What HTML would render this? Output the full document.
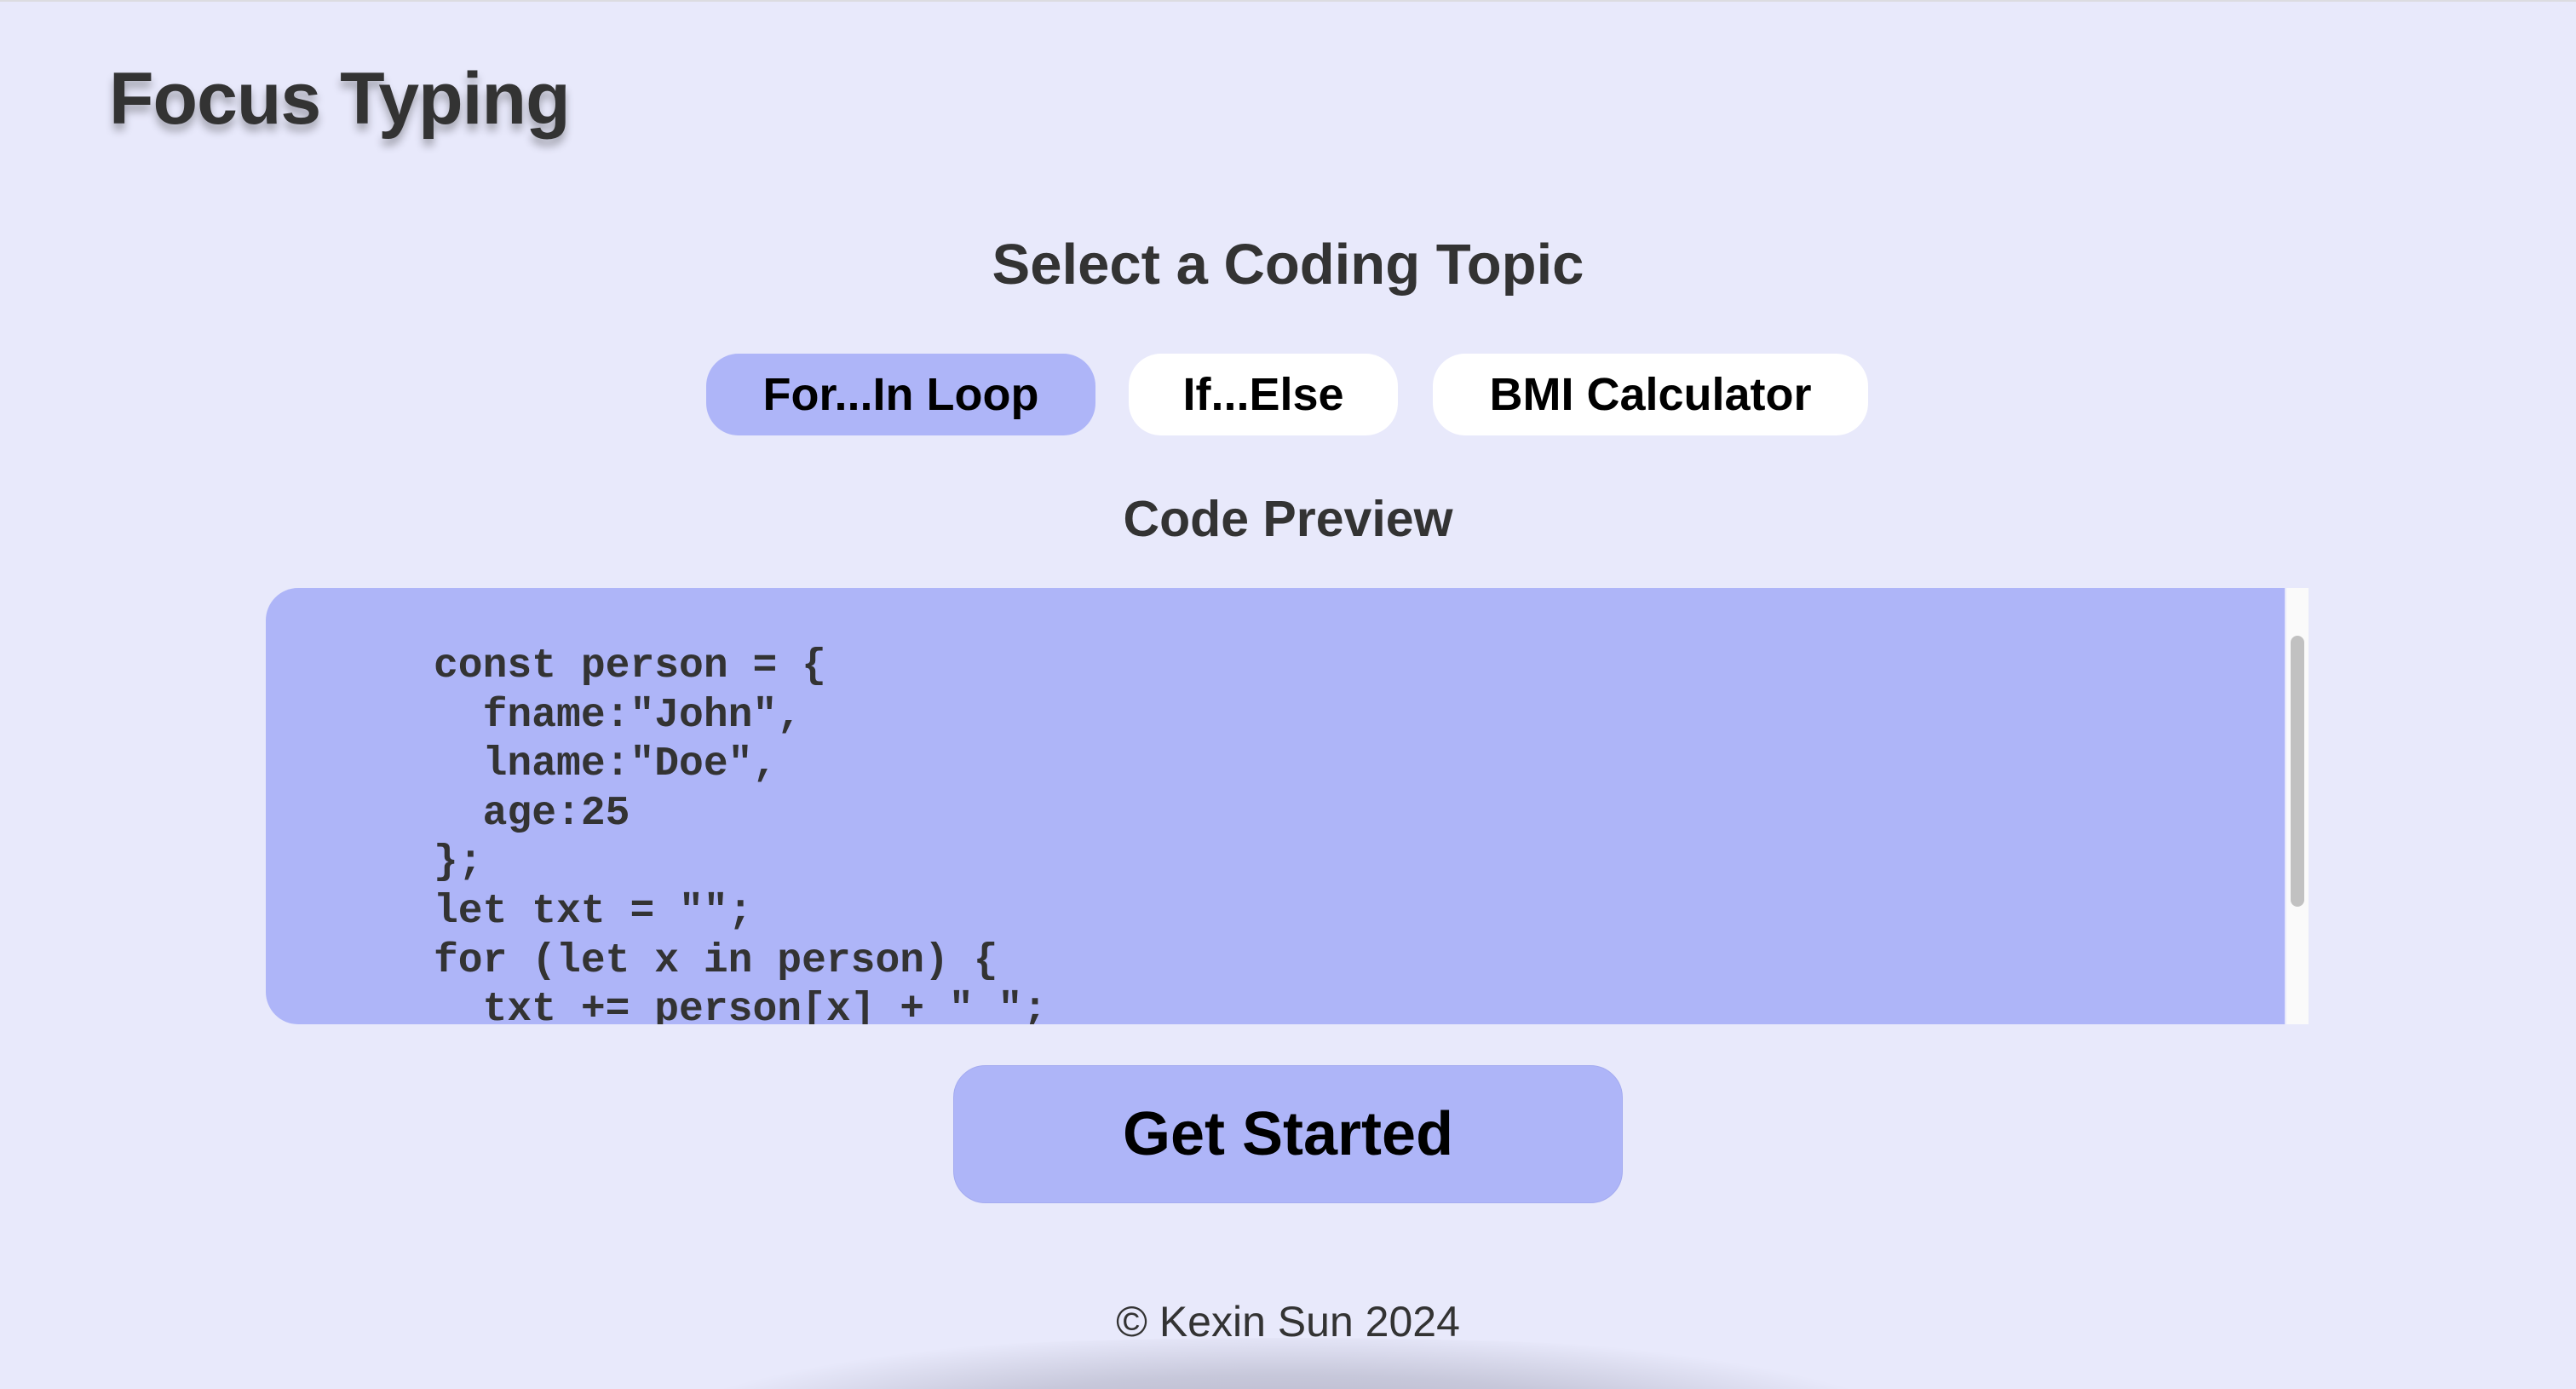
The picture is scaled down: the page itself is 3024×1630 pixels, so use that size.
<!DOCTYPE html>
<html><head><meta charset="utf-8"><style>
html,body{margin:0;padding:0;width:3024px;height:1630px;overflow:hidden;background:#e8e9fb;font-family:"Liberation Sans",Arial,sans-serif;}
.wrap{position:relative;width:3024px;height:1630px;overflow:hidden;}
.topline{position:absolute;left:0;top:0;width:3024px;height:2px;background:#dcdce0;}
.title{position:absolute;left:128px;top:56px;font-size:86px;font-weight:bold;color:#333;letter-spacing:-1px;text-shadow:0 8px 10px rgba(0,0,0,0.3);line-height:120px;}
.h2{position:absolute;left:0;width:3024px;text-align:center;font-weight:bold;color:#333;}
.btn{position:absolute;top:415px;height:96px;border-radius:38px;background:#fff;font-weight:bold;font-size:54px;color:#000;text-align:center;line-height:96px;}
.code{position:absolute;left:312px;top:690px;width:2370px;height:512px;background:#aeb5f8;border-radius:38px 0 0 38px;overflow:hidden;}
.code pre{margin:0;position:absolute;left:197px;top:64px;font-family:"Liberation Mono",monospace;font-weight:bold;font-size:48px;line-height:57.6px;color:#333;}
.sb{position:absolute;left:2684px;top:690px;width:26px;height:512px;background:#fafafa;}
.thumb{position:absolute;left:2689px;top:746px;width:16px;height:318px;border-radius:8px;background:#c1c1c1;}
.gs{position:absolute;left:1119px;top:1250px;width:786px;height:162px;border-radius:38px;background:#aeb5f8;border:1px solid #a4abf0;box-sizing:border-box;text-align:center;line-height:160px;font-weight:bold;font-size:72px;color:#000;}
.foot{position:absolute;left:0;width:3024px;top:1522px;text-align:center;font-size:50px;color:#333;}
.shadow{position:absolute;left:800px;width:1420px;top:1570px;height:120px;border-radius:50%;background:radial-gradient(ellipse at 50% 100%,rgba(150,150,170,0.7) 0%,rgba(150,150,170,0.4) 45%,rgba(232,233,251,0) 75%);}
</style></head><body><div class="wrap">
<div class="topline"></div>
<div class="shadow"></div>
<div class="title">Focus Typing</div>
<div class="h2" style="top:272px;font-size:67px;">Select a Coding Topic</div>
<div class="btn" style="left:829px;width:457px;background:#aeb5f8;">For...In Loop</div>
<div class="btn" style="left:1325px;width:316px;">If...Else</div>
<div class="btn" style="left:1682px;width:511px;">BMI Calculator</div>
<div class="h2" style="top:575px;font-size:59px;">Code Preview</div>
<div class="code"><pre>const person = {
  fname:"John",
  lname:"Doe",
  age:25
};
let txt = "";
for (let x in person) {
  txt += person[x] + " ";
}</pre></div>
<div class="sb"></div><div class="thumb"></div>
<div class="gs">Get Started</div>
<div class="foot">© Kexin Sun 2024</div>
</div></body></html>
